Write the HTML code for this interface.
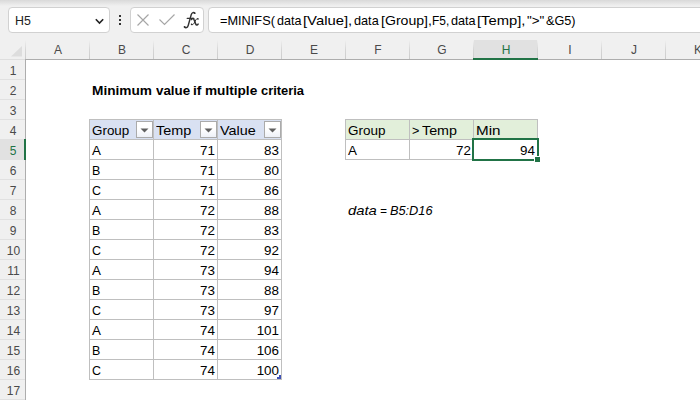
<!DOCTYPE html>
<html><head><meta charset="utf-8"><title>Excel</title>
<style>
html,body{margin:0;padding:0;}
body{width:700px;height:400px;overflow:hidden;background:#fff;font-family:"Liberation Sans",sans-serif;}
#root{position:relative;width:700px;height:400px;overflow:hidden;background:#fff;}
.abs{position:absolute;}
.bar{position:absolute;left:0;top:0;width:700px;height:40px;background:#f0f0f0;}
.box{position:absolute;top:7px;height:24px;background:#fff;border:1px solid #d1d1d1;border-radius:4px;}
.ui{position:absolute;font-size:12px;color:#222;white-space:nowrap;line-height:14px;transform-origin:0 50%;}
.ch{position:absolute;top:41px;height:19px;font-size:12px;line-height:19px;text-align:center;color:#444;}
.rh{position:absolute;left:0;width:26px;height:19px;font-size:12px;line-height:20px;text-align:center;color:#444;}
.c{position:absolute;font-size:13.4px;line-height:20px;height:20px;margin-top:1px;color:#000;white-space:nowrap;transform-origin:0 50%;}
.r{transform-origin:100% 50%;text-align:right;}
.ln{position:absolute;background:#c6c6c6;}
</style></head><body><div id="root">

<div class="bar"></div>
<div class="abs" style="left:0;top:0;width:700px;height:6px;background:linear-gradient(#d9d9d9,#f0f0f0)"></div>
<div class="box" style="left:8px;width:100px"></div>
<div class="ui" id="nb" style="left:14.99px;top:13.5px;transform:scaleX(1.0302);font-size:12px;">H5</div>
<svg class="abs" style="left:93px;top:16px" width="13" height="11" viewBox="0 0 13 11"><path d="M2.8 3.2 L6.5 7.0 L10.2 3.2" fill="none" stroke="#222" stroke-width="1.6"/></svg>
<div class="abs" style="left:119px;top:15px;width:2px;height:2px;background:#333"></div>
<div class="abs" style="left:119px;top:19px;width:2px;height:2px;background:#333"></div>
<div class="abs" style="left:119px;top:23px;width:2px;height:2px;background:#333"></div>
<div class="box" style="left:130px;width:72px"></div>
<svg class="abs" style="left:134px;top:10px" width="68" height="22" viewBox="0 0 68 22"><path d="M3.5 4.5 L14.5 15.5 M14.5 4.5 L3.5 15.5" fill="none" stroke="#a6a6a6" stroke-width="1.15"/><path d="M25.5 9.5 L30.5 14.5 L40.5 4.5" fill="none" stroke="#a6a6a6" stroke-width="1.15"/></svg>
<svg class="abs" style="left:178px;top:6px" width="28" height="28" viewBox="0 0 28 28"><g fill="none" stroke="#333" stroke-linecap="round"><path d="M6.5 21.0 C7.6 22.2 9.5 22 10.2 19.5 L13.2 8.8 C13.9 6.3 15.9 5.9 16.7 7.1" stroke-width="1.4"/><path d="M9.2 12.4 L15.8 12.4" stroke-width="1.15"/><path d="M13.4 13.4 C14.5 12.0 15.6 12.2 16.2 14 L17.5 17.4 C18.1 19.2 19.2 19.4 20.1 18.1" stroke-width="1.6"/><path d="M19.9 12.8 C19 12.2 18.3 12.7 17 15.5 C15.6 18.4 14.7 19.2 13.6 18.5" stroke-width="1.0"/></g><g fill="#333"><circle cx="6.6" cy="20.8" r="0.9"/><circle cx="16.6" cy="7.2" r="0.9"/><circle cx="19.9" cy="12.9" r="0.8"/><circle cx="13.6" cy="18.4" r="0.8"/></g></svg>
<div class="box" style="left:208px;width:500px"></div>
<div class="ui" id="f1" style="left:220.35px;top:12.5px;transform:scaleX(0.9672);font-size:13.2px;line-height:16px;color:#000;">=MINIFS(</div>
<div class="ui" id="f2" style="left:276.89px;top:12.5px;transform:scaleX(0.9509);font-size:13.2px;line-height:16px;color:#000;">data</div>
<div class="ui" id="f3" style="left:303.41px;top:12.5px;transform:scaleX(1.1249);font-size:13.2px;line-height:16px;color:#000;">[Value],</div>
<div class="ui" id="f4" style="left:353.99px;top:12.5px;transform:scaleX(0.9626);font-size:13.2px;line-height:16px;color:#000;">data</div>
<div class="ui" id="f5" style="left:380.54px;top:12.5px;transform:scaleX(1.0689);font-size:13.2px;line-height:16px;color:#000;">[Group],</div>
<div class="ui" id="f6" style="left:432.10px;top:12.5px;transform:scaleX(0.9039);font-size:13.2px;line-height:16px;color:#000;">F5,</div>
<div class="ui" id="f7" style="left:450.99px;top:12.5px;transform:scaleX(0.9587);font-size:13.2px;line-height:16px;color:#000;">data</div>
<div class="ui" id="f8" style="left:477.42px;top:12.5px;transform:scaleX(1.1207);font-size:13.2px;line-height:16px;color:#000;">[Temp],</div>
<div class="ui" id="f9" style="left:526.78px;top:12.5px;transform:scaleX(1.0129);font-size:13.2px;line-height:16px;color:#000;">&quot;&gt;&quot;</div>
<div class="ui" id="f10" style="left:545.83px;top:12.5px;transform:scaleX(0.9616);font-size:13.2px;line-height:16px;color:#000;">&amp;G5)</div>
<div class="abs" style="left:0;top:40px;width:700px;height:20px;background:#f0f0f0"></div>
<div class="abs" style="left:0;top:60px;width:26px;height:340px;background:#f0f0f0"></div>
<div class="abs" style="left:474px;top:40px;width:64px;height:20px;background:#e1e1e1"></div>
<div class="abs" style="left:0;top:140px;width:26px;height:20px;background:#e1e1e1"></div>
<svg class="abs" style="left:10px;top:44.5px" width="13" height="12" viewBox="0 0 13 12"><path d="M12 1 L12 11.5 L1 11.5 Z" fill="#dddddd"/></svg>
<div class="ln" style="left:0;top:59px;width:25px;height:1px;background:#dedede"></div>
<div class="ln" style="left:25px;top:59px;width:675px;height:1px;background:#adadad"></div>
<div class="ln" style="left:25px;top:60px;width:1px;height:340px;background:#adadad"></div>
<div class="ln" style="left:25px;top:40px;width:1px;height:19px;background:linear-gradient(#f0f0f0,#d6d6d6 50%,#cccccc)"></div>
<div class="ln" style="left:89px;top:40px;width:1px;height:19px;background:linear-gradient(#f0f0f0,#d6d6d6 50%,#cccccc)"></div>
<div class="ln" style="left:153px;top:40px;width:1px;height:19px;background:linear-gradient(#f0f0f0,#d6d6d6 50%,#cccccc)"></div>
<div class="ln" style="left:217px;top:40px;width:1px;height:19px;background:linear-gradient(#f0f0f0,#d6d6d6 50%,#cccccc)"></div>
<div class="ln" style="left:281px;top:40px;width:1px;height:19px;background:linear-gradient(#f0f0f0,#d6d6d6 50%,#cccccc)"></div>
<div class="ln" style="left:345px;top:40px;width:1px;height:19px;background:linear-gradient(#f0f0f0,#d6d6d6 50%,#cccccc)"></div>
<div class="ln" style="left:409px;top:40px;width:1px;height:19px;background:linear-gradient(#f0f0f0,#d6d6d6 50%,#cccccc)"></div>
<div class="ln" style="left:473px;top:40px;width:1px;height:19px;background:linear-gradient(#f0f0f0,#d6d6d6 50%,#cccccc)"></div>
<div class="ln" style="left:537px;top:40px;width:1px;height:19px;background:linear-gradient(#f0f0f0,#d6d6d6 50%,#cccccc)"></div>
<div class="ln" style="left:601px;top:40px;width:1px;height:19px;background:linear-gradient(#f0f0f0,#d6d6d6 50%,#cccccc)"></div>
<div class="ln" style="left:665px;top:40px;width:1px;height:19px;background:linear-gradient(#f0f0f0,#d6d6d6 50%,#cccccc)"></div>
<div class="ln" style="left:729px;top:40px;width:1px;height:19px;background:linear-gradient(#f0f0f0,#d6d6d6 50%,#cccccc)"></div>
<div class="ch" style="left:26px;width:64px;color:#4a4a4a">A</div>
<div class="ch" style="left:90px;width:64px;color:#4a4a4a">B</div>
<div class="ch" style="left:154px;width:64px;color:#4a4a4a">C</div>
<div class="ch" style="left:218px;width:64px;color:#4a4a4a">D</div>
<div class="ch" style="left:282px;width:64px;color:#4a4a4a">E</div>
<div class="ch" style="left:346px;width:64px;color:#4a4a4a">F</div>
<div class="ch" style="left:410px;width:64px;color:#4a4a4a">G</div>
<div class="ch" style="left:474px;width:64px;color:#217346">H</div>
<div class="ch" style="left:538px;width:64px;color:#4a4a4a">I</div>
<div class="ch" style="left:602px;width:64px;color:#4a4a4a">J</div>
<div class="ch" style="left:666px;width:64px;color:#4a4a4a">K</div>
<div class="rh" style="top:61px;left:0px;color:#4a4a4a">1</div>
<div class="ln" style="left:0;top:79px;width:25px;height:1px;background:#e1e1e1"></div>
<div class="rh" style="top:81px;left:0px;color:#4a4a4a">2</div>
<div class="ln" style="left:0;top:99px;width:25px;height:1px;background:#e1e1e1"></div>
<div class="rh" style="top:101px;left:0px;color:#4a4a4a">3</div>
<div class="ln" style="left:0;top:119px;width:25px;height:1px;background:#e1e1e1"></div>
<div class="rh" style="top:121px;left:0px;color:#4a4a4a">4</div>
<div class="ln" style="left:0;top:139px;width:25px;height:1px;background:#e1e1e1"></div>
<div class="rh" style="top:141px;left:0px;color:#217346">5</div>
<div class="ln" style="left:0;top:159px;width:25px;height:1px;background:#e1e1e1"></div>
<div class="rh" style="top:161px;left:0px;color:#4a4a4a">6</div>
<div class="ln" style="left:0;top:179px;width:25px;height:1px;background:#e1e1e1"></div>
<div class="rh" style="top:181px;left:0px;color:#4a4a4a">7</div>
<div class="ln" style="left:0;top:199px;width:25px;height:1px;background:#e1e1e1"></div>
<div class="rh" style="top:201px;left:0px;color:#4a4a4a">8</div>
<div class="ln" style="left:0;top:219px;width:25px;height:1px;background:#e1e1e1"></div>
<div class="rh" style="top:221px;left:0px;color:#4a4a4a">9</div>
<div class="ln" style="left:0;top:239px;width:25px;height:1px;background:#e1e1e1"></div>
<div class="rh" style="top:241px;left:0.5px;color:#4a4a4a">10</div>
<div class="ln" style="left:0;top:259px;width:25px;height:1px;background:#e1e1e1"></div>
<div class="rh" style="top:261px;left:0.5px;color:#4a4a4a">11</div>
<div class="ln" style="left:0;top:279px;width:25px;height:1px;background:#e1e1e1"></div>
<div class="rh" style="top:281px;left:0.5px;color:#4a4a4a">12</div>
<div class="ln" style="left:0;top:299px;width:25px;height:1px;background:#e1e1e1"></div>
<div class="rh" style="top:301px;left:0.5px;color:#4a4a4a">13</div>
<div class="ln" style="left:0;top:319px;width:25px;height:1px;background:#e1e1e1"></div>
<div class="rh" style="top:321px;left:0.5px;color:#4a4a4a">14</div>
<div class="ln" style="left:0;top:339px;width:25px;height:1px;background:#e1e1e1"></div>
<div class="rh" style="top:341px;left:0.5px;color:#4a4a4a">15</div>
<div class="ln" style="left:0;top:359px;width:25px;height:1px;background:#e1e1e1"></div>
<div class="rh" style="top:361px;left:0.5px;color:#4a4a4a">16</div>
<div class="ln" style="left:0;top:379px;width:25px;height:1px;background:#e1e1e1"></div>
<div class="rh" style="top:381px;left:0.5px;color:#4a4a4a">17</div>
<div class="ln" style="left:0;top:399px;width:25px;height:1px;background:#e1e1e1"></div>
<div class="abs" style="left:473px;top:58px;width:65px;height:2px;background:#217346"></div>
<div class="abs" style="left:24px;top:139px;width:2px;height:21px;background:#217346"></div>
<div class="c" id="t1" style="left:92.11px;top:80px;transform:scaleX(1.0206);font-weight:bold;">Minimum</div>
<div class="c" id="t2" style="left:156.40px;top:80px;transform:scaleX(0.9971);font-weight:bold;">value</div>
<div class="c" id="t3" style="left:193.17px;top:80px;transform:scaleX(1.0268);font-weight:bold;">if</div>
<div class="c" id="t4" style="left:205.31px;top:80px;transform:scaleX(1.0175);font-weight:bold;">multiple</div>
<div class="c" id="t5" style="left:261.13px;top:80px;transform:scaleX(0.9639);font-weight:bold;">criteria</div>
<div class="abs" style="left:90px;top:120px;width:191px;height:19px;background:#d9e1f2"></div>
<div class="ln" style="left:89px;top:119px;width:193px;height:1px;background:#bfbfbf"></div>
<div class="ln" style="left:89px;top:139px;width:193px;height:1px;background:#bfbfbf"></div>
<div class="ln" style="left:89px;top:159px;width:193px;height:1px;background:#bfbfbf"></div>
<div class="ln" style="left:89px;top:179px;width:193px;height:1px;background:#bfbfbf"></div>
<div class="ln" style="left:89px;top:199px;width:193px;height:1px;background:#bfbfbf"></div>
<div class="ln" style="left:89px;top:219px;width:193px;height:1px;background:#bfbfbf"></div>
<div class="ln" style="left:89px;top:239px;width:193px;height:1px;background:#bfbfbf"></div>
<div class="ln" style="left:89px;top:259px;width:193px;height:1px;background:#bfbfbf"></div>
<div class="ln" style="left:89px;top:279px;width:193px;height:1px;background:#bfbfbf"></div>
<div class="ln" style="left:89px;top:299px;width:193px;height:1px;background:#bfbfbf"></div>
<div class="ln" style="left:89px;top:319px;width:193px;height:1px;background:#bfbfbf"></div>
<div class="ln" style="left:89px;top:339px;width:193px;height:1px;background:#bfbfbf"></div>
<div class="ln" style="left:89px;top:359px;width:193px;height:1px;background:#bfbfbf"></div>
<div class="ln" style="left:89px;top:379px;width:193px;height:1px;background:#bfbfbf"></div>
<div class="ln" style="left:89px;top:119px;width:1px;height:261px;background:#bfbfbf"></div>
<div class="ln" style="left:153px;top:119px;width:1px;height:261px;background:#bfbfbf"></div>
<div class="ln" style="left:217px;top:119px;width:1px;height:261px;background:#bfbfbf"></div>
<div class="ln" style="left:281px;top:119px;width:1px;height:261px;background:#bfbfbf"></div>
<div class="c" id="hGroup" style="left:91.97px;top:120px;transform:scaleX(1.0008);">Group</div>
<div class="abs" style="left:136px;top:121px;width:15px;height:15px;border:1px solid #ababab;background:linear-gradient(#ffffff 45%,#eef1f8)"></div>
<svg class="abs" style="left:140px;top:128px" width="9" height="5" viewBox="0 0 9 5"><path d="M0.5 0.5 L8.5 0.5 L4.5 4.5 Z" fill="#606060"/></svg>
<div class="c" id="hTemp" style="left:155.80px;top:120px;transform:scaleX(1.0748);">Temp</div>
<div class="abs" style="left:200px;top:121px;width:15px;height:15px;border:1px solid #ababab;background:linear-gradient(#ffffff 45%,#eef1f8)"></div>
<svg class="abs" style="left:204px;top:128px" width="9" height="5" viewBox="0 0 9 5"><path d="M0.5 0.5 L8.5 0.5 L4.5 4.5 Z" fill="#606060"/></svg>
<div class="c" id="hValue" style="left:219.90px;top:120px;transform:scaleX(1.0758);">Value</div>
<div class="abs" style="left:264px;top:121px;width:15px;height:15px;border:1px solid #ababab;background:linear-gradient(#ffffff 45%,#eef1f8)"></div>
<svg class="abs" style="left:268px;top:128px" width="9" height="5" viewBox="0 0 9 5"><path d="M0.5 0.5 L8.5 0.5 L4.5 4.5 Z" fill="#606060"/></svg>
<div class="c" style="left:92px;top:140px;transform:scaleX(1.0)">A</div>
<div class="c r" style="left:154px;width:61px;top:140px">71</div>
<div class="c r" style="left:218px;width:61px;top:140px">83</div>
<div class="c" style="left:92px;top:160px;transform:scaleX(0.93)">B</div>
<div class="c r" style="left:154px;width:61px;top:160px">71</div>
<div class="c r" style="left:218px;width:61px;top:160px">80</div>
<div class="c" style="left:92px;top:180px;transform:scaleX(0.93)">C</div>
<div class="c r" style="left:154px;width:61px;top:180px">71</div>
<div class="c r" style="left:218px;width:61px;top:180px">86</div>
<div class="c" style="left:92px;top:200px;transform:scaleX(1.0)">A</div>
<div class="c r" style="left:154px;width:61px;top:200px">72</div>
<div class="c r" style="left:218px;width:61px;top:200px">88</div>
<div class="c" style="left:92px;top:220px;transform:scaleX(0.93)">B</div>
<div class="c r" style="left:154px;width:61px;top:220px">72</div>
<div class="c r" style="left:218px;width:61px;top:220px">83</div>
<div class="c" style="left:92px;top:240px;transform:scaleX(0.93)">C</div>
<div class="c r" style="left:154px;width:61px;top:240px">72</div>
<div class="c r" style="left:218px;width:61px;top:240px">92</div>
<div class="c" style="left:92px;top:260px;transform:scaleX(1.0)">A</div>
<div class="c r" style="left:154px;width:61px;top:260px">73</div>
<div class="c r" style="left:218px;width:61px;top:260px">94</div>
<div class="c" style="left:92px;top:280px;transform:scaleX(0.93)">B</div>
<div class="c r" style="left:154px;width:61px;top:280px">73</div>
<div class="c r" style="left:218px;width:61px;top:280px">88</div>
<div class="c" style="left:92px;top:300px;transform:scaleX(0.93)">C</div>
<div class="c r" style="left:154px;width:61px;top:300px">73</div>
<div class="c r" style="left:218px;width:61px;top:300px">97</div>
<div class="c" style="left:92px;top:320px;transform:scaleX(1.0)">A</div>
<div class="c r" style="left:154px;width:61px;top:320px">74</div>
<div class="c r" style="left:218px;width:61px;top:320px">101</div>
<div class="c" style="left:92px;top:340px;transform:scaleX(0.93)">B</div>
<div class="c r" style="left:154px;width:61px;top:340px">74</div>
<div class="c r" style="left:218px;width:61px;top:340px">106</div>
<div class="c" style="left:92px;top:360px;transform:scaleX(0.93)">C</div>
<div class="c r" style="left:154px;width:61px;top:360px">74</div>
<div class="c r" style="left:218px;width:61px;top:360px">100</div>
<div class="abs" style="left:277px;top:377px;width:4px;height:2px;background:#3f51b5"></div><div class="abs" style="left:279px;top:375px;width:2px;height:4px;background:#3f51b5"></div>
<div class="abs" style="left:346px;top:120px;width:191px;height:19px;background:#e2efda"></div>
<div class="ln" style="left:345px;top:119px;width:193px;height:1px;background:#bfbfbf"></div>
<div class="ln" style="left:345px;top:139px;width:193px;height:1px;background:#bfbfbf"></div>
<div class="ln" style="left:345px;top:159px;width:193px;height:1px;background:#bfbfbf"></div>
<div class="ln" style="left:345px;top:119px;width:1px;height:41px;background:#bfbfbf"></div>
<div class="ln" style="left:409px;top:119px;width:1px;height:41px;background:#bfbfbf"></div>
<div class="ln" style="left:473px;top:119px;width:1px;height:41px;background:#bfbfbf"></div>
<div class="ln" style="left:537px;top:119px;width:1px;height:41px;background:#bfbfbf"></div>
<div class="c" id="gGroup" style="left:347.87px;top:120px;transform:scaleX(1.0062);">Group</div>
<div class="c" id="gGt" style="left:411.82px;top:120px;transform:scaleX(0.9415);">&gt;</div>
<div class="c" id="gTemp" style="left:422.10px;top:120px;transform:scaleX(1.0671);">Temp</div>
<div class="c" id="gMin" style="left:475.76px;top:120px;transform:scaleX(1.1350);">Min</div>
<div class="c" style="left:348px;top:140px">A</div>
<div class="c r" style="left:410px;width:61px;top:140px">72</div>
<div class="c r" style="left:474px;width:61px;top:140px">94</div>
<div class="abs" style="left:472px;top:138px;width:63px;height:19px;border:2px solid #217346"></div>
<div class="abs" style="left:534px;top:156px;width:5px;height:5px;background:#217346;border:1px solid #fff"></div>
<div class="c" id="n1" style="left:348.46px;top:200px;transform:scaleX(1.1075);font-style:italic;">data</div>
<div class="c" id="n2" style="left:380.08px;top:200px;transform:scaleX(0.8694);font-style:italic;">=</div>
<div class="c" id="n3" style="left:390.36px;top:200px;transform:scaleX(0.9507);font-style:italic;">B5:D16</div>
</div></body></html>
